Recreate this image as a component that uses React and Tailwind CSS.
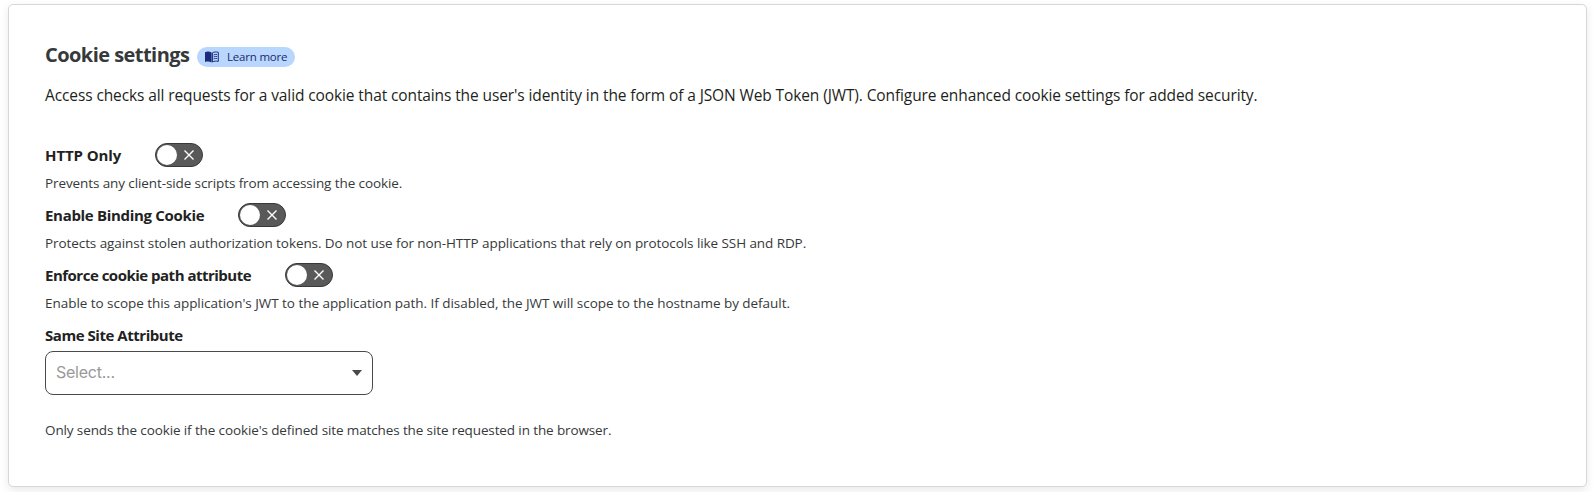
import { useState } from 'react';

const toggles = [
  {
    id: 'http-only',
    label: 'HTTP Only',
    labelClass: 'w-[78px] tracking-[-0.1px]',
    description: 'Prevents any client-side scripts from accessing the cookie.',
    descriptionClass: 'tracking-[-0.1px]',
  },
  {
    id: 'binding-cookie',
    label: 'Enable Binding Cookie',
    labelClass: 'w-[161px] tracking-[-0.31px]',
    description:
      'Protects against stolen authorization tokens. Do not use for non-HTTP applications that rely on protocols like SSH and RDP.',
    descriptionClass: 'tracking-[-0.08px]',
  },
  {
    id: 'cookie-path',
    label: 'Enforce cookie path attribute',
    labelClass: 'w-[208px] tracking-[-0.5px]',
    description:
      "Enable to scope this application's JWT to the application path. If disabled, the JWT will scope to the hostname by default.",
    descriptionClass: 'tracking-[-0.04px]',
  },
];

function BookIcon() {
  return (
    <svg viewBox="0 0 14 12" className="w-[14px] h-[12px] shrink-0" fill="none">
      <path d="M0 1.2C2.2.3 4.6.4 6.6 1.6V11.4C4.6 10.2 2.2 10.2 0 10.9Z" fill="#1b2a7a" />
      <path
        d="M7.4 1.9C9.2.8 11.2.7 13.3 1.3V10.4C11.2 9.9 9.2 10 7.4 11Z"
        stroke="#1b2a7a"
        strokeWidth="1"
      />
      <path
        d="M8.6 3.9C9.8 3.4 11 3.3 12.2 3.5M8.6 5.9C9.8 5.4 11 5.3 12.2 5.5M8.6 7.9C9.8 7.4 11 7.3 12.2 7.5"
        stroke="#1b2a7a"
        strokeWidth="0.9"
      />
    </svg>
  );
}

function Toggle({ label, on, onChange }) {
  return (
    <button
      type="button"
      role="switch"
      aria-checked={on}
      aria-label={label}
      onClick={() => onChange(!on)}
      className={`flex items-center justify-between w-12 h-6 rounded-full border border-[#36393a] bg-[#595959] pl-px pr-2 ${on ? 'flex-row-reverse' : ''}`}
    >
      <span className="w-5 h-5 rounded-full bg-white" />
      <svg viewBox="0 0 10 10" className="w-[10px] h-[10px]" stroke="#fff" strokeWidth="1.4">
        <path d="M.5.5l9 9M9.5.5l-9 9" />
      </svg>
    </button>
  );
}

export default function App() {
  const [state, setState] = useState({});

  return (
    <div className="h-[492px] overflow-hidden bg-white pt-1 pl-2 font-['Open_Sans','Noto_Sans',sans-serif]">
      <section className="w-[1579px] h-[483px] rounded-[5px] border border-[#d5d7d8] bg-white pt-9 px-9 shadow-[0_3px_10px_rgba(0,0,0,0.09)]">
        <div className="flex items-center h-7">
          <h2 className="w-[144px] whitespace-nowrap text-[20px] leading-7 font-bold tracking-[-0.55px] text-[#36393a]">
            Cookie settings
          </h2>
          <a
            href="#learn-more"
            className="mt-[3px] ml-2 flex items-center w-[98px] h-5 rounded-full bg-[#b9d6ff] pl-2 text-[11.5px] leading-5 tracking-[-0.2px] text-[#1b2a6a] whitespace-nowrap"
          >
            <BookIcon />
            <span className="ml-2">Learn more</span>
          </a>
        </div>

        <p className="mt-[14px] text-[15.5px] leading-6 whitespace-nowrap tracking-[-0.11px] text-[#1d1f20]">
          Access checks all requests for a valid cookie that contains the user's identity in the
          form of a JSON Web Token (JWT). Configure enhanced cookie settings for added security.
        </p>

        <div className="mt-9">
          {toggles.map(({ id, label, labelClass, description, descriptionClass }) => (
            <div key={id} className="h-[60px]">
              <div className="flex items-center h-6 gap-8">
                <span className={`text-[15px] leading-6 font-bold whitespace-nowrap text-[#222] ${labelClass}`}>
                  {label}
                </span>
                <Toggle
                  label={label}
                  on={!!state[id]}
                  onChange={(value) => setState({ ...state, [id]: value })}
                />
              </div>
              <p className={`mt-1.5 text-[13.5px] leading-5 whitespace-nowrap text-[#36393a] ${descriptionClass}`}>
                {description}
              </p>
            </div>
          ))}
        </div>

        <div className="text-[15px] leading-6 font-bold tracking-[-0.46px] text-[#222]">
          Same Site Attribute
        </div>
        <button
          type="button"
          className="mt-1 flex items-center justify-between w-[328px] h-11 rounded-lg border border-[#4a4a4a] bg-white pl-2.5 pr-[10px]"
        >
          <span className="pb-0.5 font-['Inter',sans-serif] text-[16px] tracking-[-0.25px] text-[#999]">
            Select...
          </span>
          <svg viewBox="0 0 10 6" className="w-[10px] h-[6px]" fill="#4a4a4a">
            <path d="M0 0h10L5 6z" />
          </svg>
        </button>
        <p className="mt-[25px] text-[13.5px] leading-5 whitespace-nowrap tracking-[-0.12px] text-[#36393a]">
          Only sends the cookie if the cookie's defined site matches the site requested in the
          browser.
        </p>
      </section>
    </div>
  );
}
